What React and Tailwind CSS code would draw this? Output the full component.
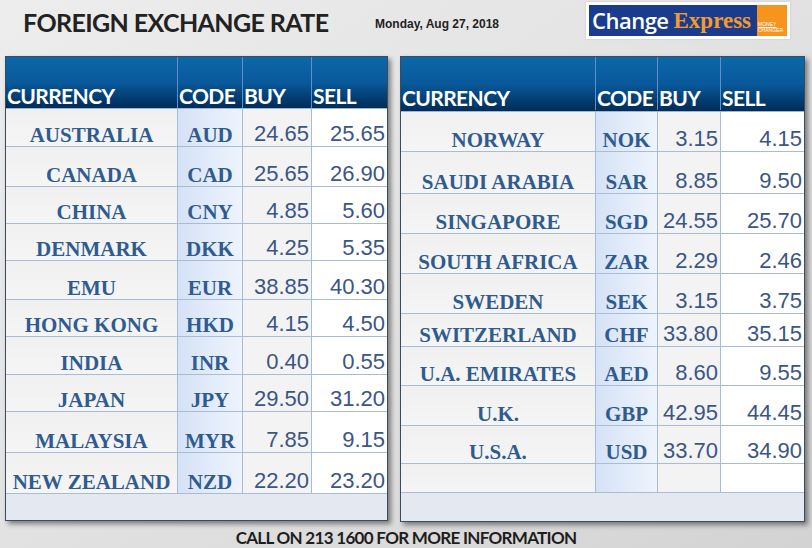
import React from "react";

const leftRows = [
  { name: "AUSTRALIA", code: "AUD", buy: "24.65", sell: "25.65", h: "h-[38px]" },
  { name: "CANADA", code: "CAD", buy: "25.65", sell: "26.90", h: "h-[40px]" },
  { name: "CHINA", code: "CNY", buy: "4.85", sell: "5.60", h: "h-[37px]" },
  { name: "DENMARK", code: "DKK", buy: "4.25", sell: "5.35", h: "h-[37px]" },
  { name: "EMU", code: "EUR", buy: "38.85", sell: "40.30", h: "h-[39px]" },
  { name: "HONG KONG", code: "HKD", buy: "4.15", sell: "4.50", h: "h-[37px]" },
  { name: "INDIA", code: "INR", buy: "0.40", sell: "0.55", h: "h-[38px]" },
  { name: "JAPAN", code: "JPY", buy: "29.50", sell: "31.20", h: "h-[37px]" },
  { name: "MALAYSIA", code: "MYR", buy: "7.85", sell: "9.15", h: "h-[41px]" },
  { name: "NEW ZEALAND", code: "NZD", buy: "22.20", sell: "23.20", h: "h-[41px]" },
];

const rightRows = [
  { name: "NORWAY", code: "NOK", buy: "3.15", sell: "4.15", h: "h-[40px]" },
  { name: "SAUDI ARABIA", code: "SAR", buy: "8.85", sell: "9.50", h: "h-[42px]" },
  { name: "SINGAPORE", code: "SGD", buy: "24.55", sell: "25.70", h: "h-[40px]" },
  { name: "SOUTH AFRICA", code: "ZAR", buy: "2.29", sell: "2.46", h: "h-[40px]" },
  { name: "SWEDEN", code: "SEK", buy: "3.15", sell: "3.75", h: "h-[40px]" },
  { name: "SWITZERLAND", code: "CHF", buy: "33.80", sell: "35.15", h: "h-[33px]" },
  { name: "U.A. EMIRATES", code: "AED", buy: "8.60", sell: "9.55", h: "h-[39px]" },
  { name: "U.K.", code: "GBP", buy: "42.95", sell: "44.45", h: "h-[40px]" },
  { name: "U.S.A.", code: "USD", buy: "33.70", sell: "34.90", h: "h-[38px]" },
  { name: "", code: "", buy: "", sell: "", h: "h-[29px]" },
];

const serif = "font-['Liberation_Serif',serif] font-bold text-[21px] leading-[22px] text-[#2f5b8f]";
const num = "font-['Liberation_Sans',Arial,sans-serif] text-[22px] leading-[24px] text-[#3b5686]";
const head = "border-r border-[#5f91c6] pl-[1px] flex items-end";

const RateTable = ({ rows, cols, headH, footH, width, pad }) => (
  <div
    className={`${width} flex flex-col border border-[#3d4b5e] shadow-[3px_3px_5px_rgba(0,0,0,0.45)] bg-white`}
  >
    <div
      className={`${headH} flex bg-linear-to-b from-[#0b68aa] via-[#09599b] to-[#012c57] border-b border-[#9db6d6] text-white font-['Lato',sans-serif] font-bold text-[21px] leading-[25px] tracking-[-0.6px] ${pad}`}
    >
      <div className={`${cols[0]} ${head}`}>CURRENCY</div>
      <div className={`${cols[1]} ${head}`}>CODE</div>
      <div className={`${cols[2]} ${head}`}>BUY</div>
      <div className={`${cols[3]} pl-[1px] flex items-end`}>SELL</div>
    </div>
    {rows.map((r, i) => (
      <div key={i} className={`${r.h} flex border-b border-[#a9bcd5]`}>
        <div
          className={`${cols[0]} bg-linear-to-b from-[#f0f0f0] to-[#f5f5f5] border-r border-[#a9bcd5] flex items-end justify-center ${serif}`}
        >
          {r.name}
        </div>
        <div
          className={`${cols[1]} bg-linear-to-r from-[#d5e2f6] to-[#eef4fd] border-r border-[#a9bcd5] flex items-end justify-center ${serif}`}
        >
          {r.code}
        </div>
        <div
          className={`${cols[2]} bg-[#f3f3f3] border-r border-[#a9bcd5] flex items-end justify-end pr-[2px] ${num}`}
        >
          {r.buy}
        </div>
        <div className={`${cols[3]} bg-white flex items-end justify-end pr-[2px] ${num}`}>
          {r.sell}
        </div>
      </div>
    ))}
    <div className={`${footH} bg-[#e4e9f1]`}></div>
  </div>
);

const Logo = () => (
  <div className="flex bg-white p-[3px] shadow-[0_0_2px_rgba(0,0,0,0.15)]">
    <div className="w-[168px] h-[31px] bg-[#1b3c8c] flex items-center pl-[3px] gap-[5px]">
      <span className="font-['Open_Sans',sans-serif] font-semibold text-[22px] leading-[31px] text-white tracking-[-0.5px]">
        Change
      </span>
      <span className="font-['Liberation_Serif',serif] font-bold text-[23px] leading-[31px] text-[#f39a2c]">
        Express
      </span>
    </div>
    <div className="w-[30px] h-[31px] bg-[#f7941d] flex flex-col justify-end pl-[1px] pb-[3px] font-['Liberation_Sans',sans-serif] text-[5px] leading-[6px] text-white">
      <span className="underline">MONEY</span>
      <span>CHANGER</span>
    </div>
  </div>
);

export default function App() {
  return (
    <div className="w-[812px] h-[548px] overflow-hidden bg-linear-to-br from-[#ededed] via-[#e2e2e2] to-[#d3d3d3] flex flex-col">
      <div className="h-[57px] flex">
        <div className="w-[352px] ml-[23px] pt-[7px] font-['Lato',sans-serif] font-bold text-[25px] leading-[30px] tracking-[-0.6px] text-[#222222]">
          FOREIGN EXCHANGE RATE
        </div>
        <div className="pt-[17px] font-['Liberation_Sans',Arial,sans-serif] font-bold text-[12px] leading-[14px] text-[#222222]">
          Monday, Aug 27, 2018
        </div>
        <div className="ml-auto mr-[22px] pt-[2px]">
          <Logo />
        </div>
      </div>
      <div className="flex items-start pl-[5px] gap-[12px]">
        <RateTable
          rows={leftRows}
          cols={["w-[172px]", "w-[65px]", "w-[69px]", "w-[75px]"]}
          headH="h-[52px]"
          footH="h-[26px]"
          width="w-[383px]"
          pad="pb-0"
        />
        <RateTable
          rows={rightRows}
          cols={["w-[195px]", "w-[62px]", "w-[63px]", "w-[83px]"]}
          headH="h-[55px]"
          footH="h-[28px]"
          width="w-[405px]"
          pad="pb-[1px]"
        />
      </div>
      <div className="mt-[6px] text-center font-['Lato',sans-serif] font-bold text-[17px] leading-[20px] tracking-[-0.7px] text-[#1e1e1e]">
        CALL ON 213 1600 FOR MORE INFORMATION
      </div>
    </div>
  );
}
